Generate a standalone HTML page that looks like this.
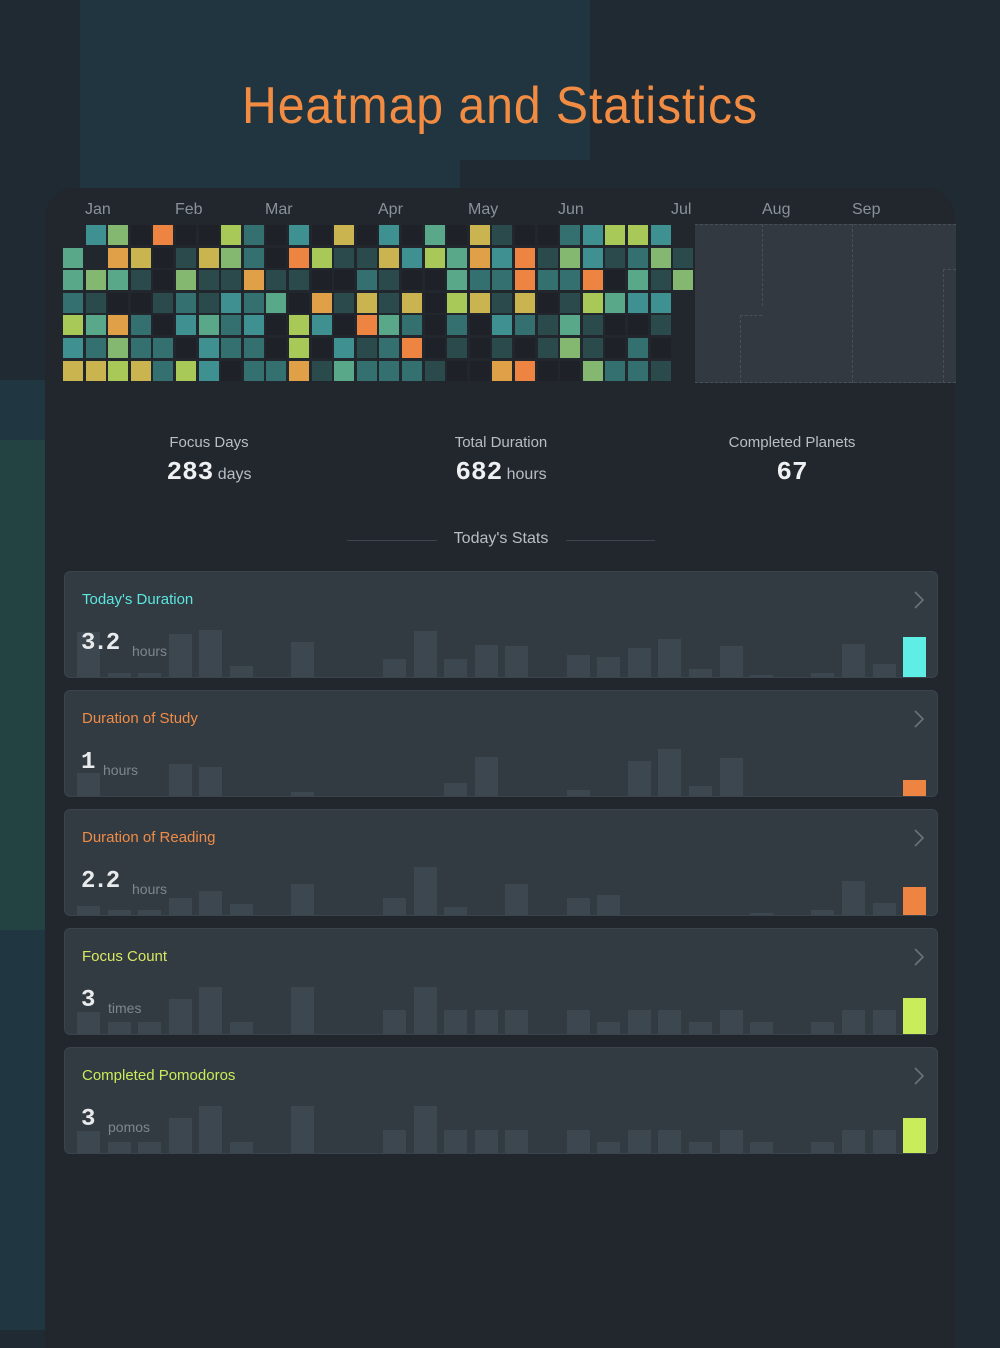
<!DOCTYPE html>
<html><head><meta charset="utf-8"><style>
*{margin:0;padding:0;box-sizing:border-box}
body{width:1000px;height:1334px;overflow:hidden;background:#1f2a33;font-family:"Liberation Sans",sans-serif;position:relative}
.abs{position:absolute}
#title{position:absolute;left:200px;top:76px;width:600px;text-align:center;color:#f28c42;font-size:52px;white-space:nowrap;transform:scaleX(0.927);transform-origin:center;letter-spacing:1px}
#panel{position:absolute;left:45px;top:188px;width:910px;height:1160px;background:#22262d;border-radius:30px 30px 0 0}
.mon{position:absolute;top:201px;color:#8a929a;font-size:16px}
.cell{position:absolute;width:20px;height:20px}
.lab{position:absolute;color:#b8bec4;font-size:15px;text-align:center;width:240px}
.val{position:absolute;color:#eef0f2;font-family:"Liberation Mono",monospace;font-weight:bold;font-size:26px;width:240px;text-align:center}
.val span{font-family:"Liberation Sans",sans-serif;font-weight:normal;font-size:16px;color:#b8bec4}
.card{position:absolute;left:64px;width:874px;height:107px;background:#323a42;border:1px solid #3b444c;border-radius:6px;overflow:hidden}
.card .t{position:absolute;left:17px;top:19px;font-size:15px}
.card .v{position:absolute;left:16px;top:58px;color:#e8eaec;font-family:"Liberation Mono",monospace;font-weight:bold;font-size:24px;letter-spacing:-2px}
.card .u{position:absolute;top:71px;color:#7e868e;font-size:14px}
.bar{position:absolute;bottom:0;width:23px;background:#3d4750}
.chev{position:absolute;right:12px;top:19px}
</style></head><body>
<div class="abs" style="left:80px;top:0;width:380px;height:360px;background:#213540"></div>
<div class="abs" style="left:330px;top:0;width:260px;height:160px;background:#213540"></div>
<div class="abs" style="left:0;top:440px;width:45px;height:490px;background:#234242"></div>
<div class="abs" style="left:0;top:930px;width:45px;height:400px;background:#203741"></div>
<div class="abs" style="left:0;top:380px;width:45px;height:60px;background:#203741"></div>
<div id="title">Heatmap and Statistics</div>
<div id="panel"></div>
<div class="mon" style="left:85px">Jan</div>
<div class="mon" style="left:175px">Feb</div>
<div class="mon" style="left:265px">Mar</div>
<div class="mon" style="left:378px">Apr</div>
<div class="mon" style="left:468px">May</div>
<div class="mon" style="left:558px">Jun</div>
<div class="mon" style="left:671px">Jul</div>
<div class="mon" style="left:762px">Aug</div>
<div class="mon" style="left:852px">Sep</div>
<div class="abs" style="left:695px;top:224px;width:261px;height:159px;background:#323940;border-top:1px dashed #48505a;border-bottom:1px dashed #48505a"></div>
<div class="abs" style="left:762px;top:224px;width:1px;height:82px;border-left:1px dashed #48505a"></div>
<div class="abs" style="left:852px;top:224px;width:1px;height:159px;border-left:1px dashed #48505a"></div>
<div class="abs" style="left:740px;top:315px;width:22px;height:68px;border-left:1px dashed #48505a;border-top:1px dashed #48505a"></div>
<div class="abs" style="left:943px;top:269px;width:13px;height:114px;border-left:1px dashed #48505a;border-top:1px dashed #48505a"></div>
<div id="grid"></div>
<div class="lab" style="left:89px;top:434px">Focus Days</div>
<div class="val" style="left:89px;top:457px">283<span> days</span></div>
<div class="lab" style="left:381px;top:434px">Total Duration</div>
<div class="val" style="left:381px;top:457px">682<span> hours</span></div>
<div class="lab" style="left:672px;top:434px">Completed Planets</div>
<div class="val" style="left:672px;top:457px">67</div>
<div class="abs" style="left:347px;top:540px;width:90px;height:1px;background:#3c444c"></div>
<div class="abs" style="left:566px;top:540px;width:89px;height:1px;background:#3c444c"></div>
<div class="abs" style="left:440px;top:530px;width:122px;text-align:center;color:#b8bec4;font-size:16px">Today's Stats</div>
<div id="cards"></div>
<script>
var C={e:'#22262d',d:'#2b4a4c',m:'#357070',t:'#3f9090',g:'#5aa88a',G:'#84b870',l:'#a8c858',y:'#c9b450',o:'#e0a048',O:'#ee8442',x:null};
var rows=["xtGxOxxlmxtxyxtxgxydxxmtllt g".slice(0,28),
"geoyxdyGmxOlddytlgotOdGtdmGd",
"gGgdxGddoddxxmdxxgmmOmmOxgdG",
"mdxxdmdtmgxodydyxlydyxdlgttx",
"lgomxtgmtxltxOgmxmxtmdgdxxdx",
"tmGmmxtmmxlxtdmOxdxdxdGdxmxx",
"yylymltxmmodgmmmdxxoOxxGmmdx"];
var h='';
for(var r=0;r<7;r++)for(var c=0;c<28;c++){var k=rows[r][c];var col=C[k];if(col===null||col===undefined)continue;
h+='<div class="cell" style="left:'+(63+c*22.6).toFixed(1)+'px;top:'+(225+r*22.6).toFixed(1)+'px;background:'+col+'"></div>';}
for(var r=0;r<7;r++)for(var c=0;c<28;c++){if(rows[r][c]=='x'&&!(r==0&&c==0)&&!(c==27&&r>2))h+='<div class="cell" style="left:'+(63+c*22.6).toFixed(1)+'px;top:'+(225+r*22.6).toFixed(1)+'px;background:#1e2228"></div>';}
document.getElementById('grid').innerHTML=h;
var cards=[
{y:571,t:"Today's Duration",tc:'#5ce6e0',v:'3.2',u:'hours',ux:67,hc:'#5eeee6',b:[45,4,4,43,47,11,0,35,0,0,18,46,18,32,31,0,22,20,29,38,8,31,2,0,4,33,13,40]},
{y:690,t:"Duration of Study",tc:'#f08c46',v:'1',u:'hours',ux:38,hc:'#ee8442',b:[23,0,0,32,29,0,0,4,0,0,0,0,13,39,0,0,6,0,35,47,10,38,0,0,0,0,0,16]},
{y:809,t:"Duration of Reading",tc:'#f08c46',v:'2.2',u:'hours',ux:67,hc:'#ee8442',b:[9,5,5,17,24,11,0,31,0,0,17,48,8,0,31,0,17,20,0,0,0,0,2,0,5,34,12,28]},
{y:928,t:"Focus Count",tc:'#d8e860',v:'3',u:'times',ux:43,hc:'#c8ec5a',b:[22,12,12,35,47,12,0,47,0,0,24,47,24,24,24,0,24,12,24,24,12,24,12,0,12,24,24,36]},
{y:1047,t:"Completed Pomodoros",tc:'#c8ec5a',v:'3',u:'pomos',ux:43,hc:'#c8ec5a',b:[22,11,11,35,47,11,0,47,0,0,23,47,23,23,23,0,23,11,23,23,11,23,11,0,11,23,23,35]}];
var s='';
cards.forEach(function(c){s+='<div class="card" style="top:'+c.y+'px">';
c.b.forEach(function(v,i){if(v>0)s+='<div class="bar" style="left:'+(12+i*30.6).toFixed(1)+'px;height:'+v+'px;'+(i==27?'background:'+c.hc:'')+'"></div>';});
s+='<div class="t" style="color:'+c.tc+'">'+c.t+'</div><div class="v">'+c.v+'</div><div class="u" style="left:'+c.ux+'px">'+c.u+'</div>';
s+='<svg class="chev" width="12" height="18" viewBox="0 0 12 18"><path d="M2 1 L10 9 L2 17" fill="none" stroke="#6a737c" stroke-width="1.6"/></svg></div>';});
document.getElementById('cards').innerHTML=s;
</script>
</body></html>
